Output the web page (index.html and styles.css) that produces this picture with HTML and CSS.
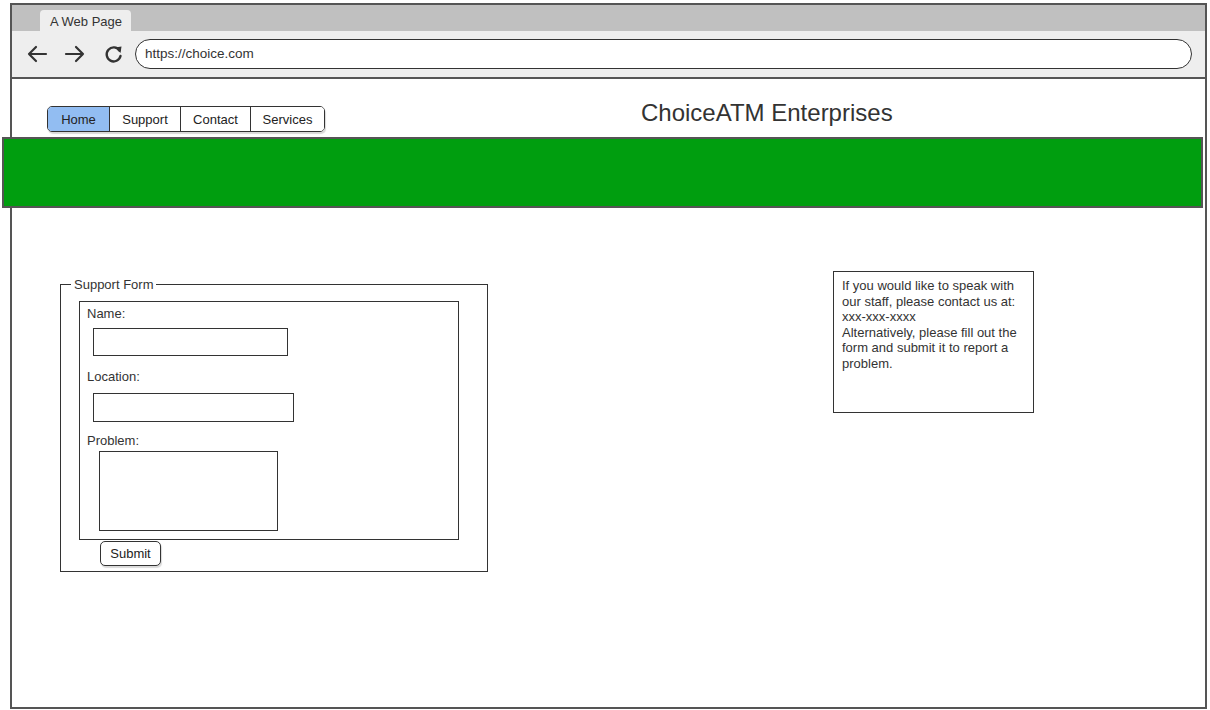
FILE: index.html
```html
<!DOCTYPE html>
<html>
  <head>
    <title>ChoiceATM Enterprises</title>
    <link rel="stylesheet" href="styles.css">
  </head>
  <body>
    <div class="window">
      <div class="tabs">
        <div class="tab">A Web Page</div>
      </div>
      <div class="toolbar">
        <svg class="icon" width="22" height="20" viewBox="0 0 22 20">
          <path d="M20 10H3M10 3L3 10L10 17" fill="none" stroke="#333" stroke-width="2.2" stroke-linecap="round" stroke-linejoin="round"/>
        </svg>
        <svg class="icon" width="22" height="20" viewBox="0 0 22 20">
          <path d="M2 10H19M12 3L19 10L12 17" fill="none" stroke="#333" stroke-width="2.2" stroke-linecap="round" stroke-linejoin="round"/>
        </svg>
        <svg class="icon reload" width="20" height="20" viewBox="0 0 20 20">
          <path d="M15.5 6.5A7 7 0 1 0 16.5 12" fill="none" stroke="#333" stroke-width="2.4" stroke-linecap="round"/>
          <path d="M11 3.5L17.5 2.5L16.5 9Z" fill="#333"/>
        </svg>
        <div class="address">https://choice.com</div>
      </div>

      <div class="page">
        <div class="header">
          <div class="nav">
            <button class="nav-btn active home">Home</button>
            <button class="nav-btn support-btn">Support</button>
            <button class="nav-btn contact-btn">Contact</button>
            <button class="nav-btn services-btn">Services</button>
          </div>
          <h1 class="title">ChoiceATM Enterprises</h1>
        </div>

        <div class="band"></div>

        <div class="content">
          <fieldset class="support">
            <legend>Support Form</legend>
            <div class="form-box">
              <label>Name:</label>
              <input type="text" class="field name">
              <label>Location:</label>
              <input type="text" class="field location">
              <label>Problem:</label>
              <textarea class="field problem"></textarea>
            </div>
            <button class="submit">Submit</button>
          </fieldset>

          <div class="info">
            If you would like to speak with<br>
            our staff, please contact us at:<br>
            xxx-xxx-xxxx<br>
            Alternatively, please fill out the<br>
            form and submit it to report a<br>
            problem.
          </div>
        </div>
      </div>
    </div>
  </body>
</html>
```

FILE: styles.css
```css
* {
  box-sizing: border-box;
}
body {
  margin: 0;
  background-color: #fff;
  font-family: "Liberation Sans", Arial, sans-serif;
  color: #333;
  overflow: hidden;
}
.window {
  margin: 3px 0 0 10px;
  width: 1197px;
  height: 706px;
  border: 2px solid #555;
  display: flex;
  flex-direction: column;
}
.tabs {
  height: 26px;
  background-color: #c0c0c0;
  padding-left: 28px;
  display: flex;
  align-items: flex-end;
}
.tab {
  width: 91px;
  height: 21px;
  background-color: #eeeeee;
  border-radius: 4px 4px 0 0;
  font-size: 13px;
  padding: 4px 0 0 10px;
}
.toolbar {
  height: 48px;
  background-color: #eeeeee;
  border-bottom: 2px solid #555;
  display: flex;
  align-items: center;
  padding-left: 14px;
}
.icon {
  margin-right: 16px;
}
.reload {
  margin-left: 2px;
  margin-right: 11px;
}
.address {
  width: 1057px;
  height: 30px;
  background-color: #fff;
  border: 1.5px solid #333;
  border-radius: 15px;
  font-size: 13.5px;
  padding: 6px 0 0 9px;
}
.page {
  flex: 1;
  display: flex;
  flex-direction: column;
}
.header {
  display: flex;
  align-items: flex-end;
  padding: 24px 0 0 35px;
  height: 58px;
}
.nav {
  display: flex;
  border: 1.5px solid #333;
  border-radius: 5px;
  overflow: hidden;
  margin-bottom: 5px;
  box-shadow: 1px 2px 1px rgba(0, 0, 0, 0.15);
}
.nav-btn {
  height: 24px;
  background-color: #fff;
  border: none;
  border-left: 1.5px solid #333;
  font-family: inherit;
  font-size: 13px;
  color: #222;
  padding: 0;
}
.home {
  width: 61px;
  border-left: none;
}
.support-btn {
  width: 71px;
}
.contact-btn {
  width: 70px;
}
.services-btn {
  width: 74px;
}
.nav-btn.active {
  background-color: #92bdf2;
}
.title {
  margin: 0 0 10px 316px;
  font-size: 24px;
  font-weight: normal;
  color: #333;
}
.band {
  height: 71px;
  margin-left: -10px;
  width: 1201px;
  background-color: #009e0f;
  border: 2px solid #555;
}
.content {
  display: flex;
  align-items: flex-start;
  padding-left: 48px;
}
.support {
  margin: 69px 0 0 0;
  width: 428px;
  height: 295px;
  border: 1.5px solid #333;
  padding: 9px 0 0 18px;
}
.support legend {
  font-size: 13px;
  padding: 0 3px;
  margin-left: -8px;
}
.form-box {
  width: 380px;
  height: 239px;
  border: 1.5px solid #333;
  display: flex;
  flex-direction: column;
  align-items: flex-start;
  padding: 5px 0 0 7px;
}
.form-box label {
  font-size: 13px;
  line-height: 14px;
}
.field {
  border: 1.5px solid #333;
  background-color: #fff;
  font-family: inherit;
  margin-left: 6px;
}
.name {
  width: 195px;
  height: 28px;
  margin-top: 7px;
  margin-bottom: 14px;
}
.location {
  width: 201px;
  height: 29px;
  margin-top: 9px;
  margin-bottom: 12px;
}
.problem {
  width: 179px;
  height: 80px;
  margin: 3px 0 0 12px;
  resize: none;
}
.submit {
  margin: 1px 0 0 21px;
  width: 61px;
  height: 25px;
  background-color: #fff;
  border: 1.5px solid #333;
  border-radius: 5px;
  font-family: inherit;
  font-size: 13px;
  color: #222;
  box-shadow: 1px 2px 1px rgba(0, 0, 0, 0.15);
}
.info {
  margin: 63px 0 0 345px;
  width: 201px;
  height: 142px;
  border: 1.5px solid #333;
  padding: 6px 0 0 8px;
  font-size: 13px;
  line-height: 15.6px;
  white-space: nowrap;
}
```
